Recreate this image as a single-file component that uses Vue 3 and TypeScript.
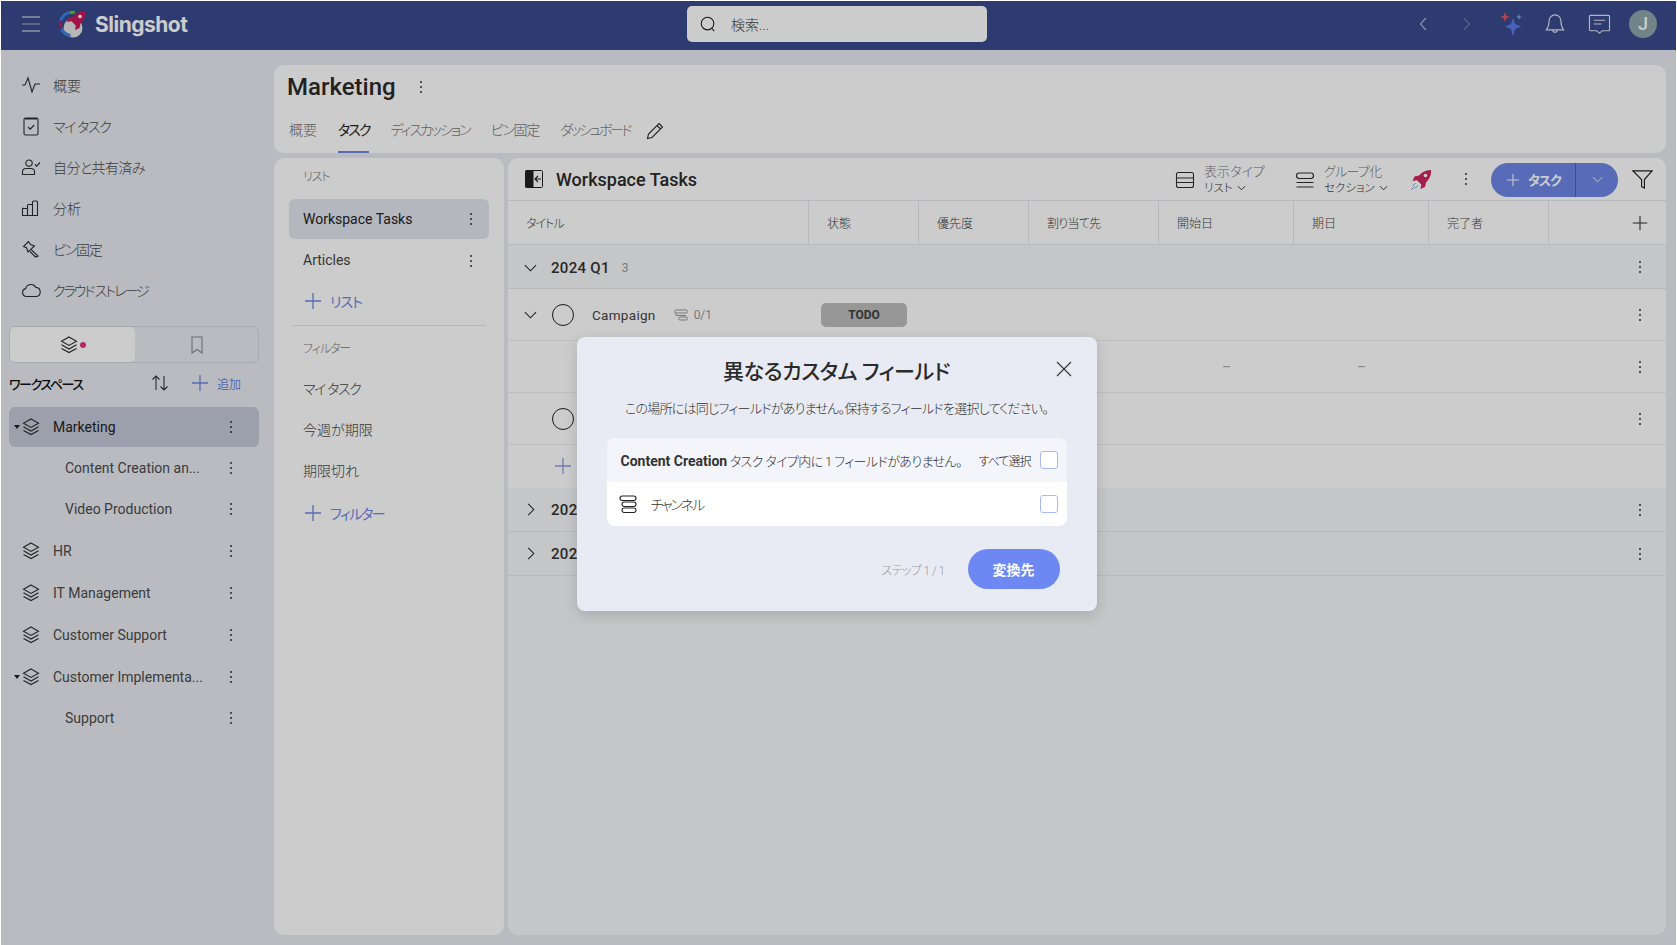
<script setup lang="ts">
const navItems = [
  { label: '概要', ls: '0', d: 'M1 10h3l3-7 4 14 3-8h5' },
  { label: 'マイ タスク', ls: '-1.4px', d: 'M3 3.5A1.5 1.5 0 0 1 4.5 2h11A1.5 1.5 0 0 1 17 3.5v14a1.5 1.5 0 0 1-1.5 1.5h-11A1.5 1.5 0 0 1 3 17.5zM4 3h12M7 11l2.2 2.2 4-4.2' },
  { label: '自分と共有済み', ls: '-.6px', d: 'M8 3a3.2 3.2 0 1 1 0 6.4A3.2 3.2 0 0 1 8 3zM1.5 17.5V15A3.5 3.5 0 0 1 5 11.5h5a3.5 3.5 0 0 1 3.5 3.5v2.5zM14 7.5l1.6 1.6 3.4-3.6' },
  { label: '分析', ls: '0', d: 'M2.5 10.5H6a.5.5 0 0 1 .5.5v6.5h-5V11a.5.5 0 0 1 1-.5zM6.5 7.5a1 1 0 0 1 1-1h3a1 1 0 0 1 1 1v10h-5zM11.5 4a1 1 0 0 1 1-1h3a1 1 0 0 1 1 1v13.5h-5z' },
  { label: 'ピン固定', ls: '-1.2px', d: 'M7.5 2.5L2.5 7.500l3 1.200 1.500 4.300 6.500-6-4-1.500zM10.500 11l6.500 6-2.500 1-5.500-5.500' },
  { label: 'クラウド ストレージ', ls: '-2px', d: 'M5.5 16.5a4 4 0 0 1-.8-7.9 5.5 5.5 0 0 1 10.2-1.2 4.6 4.6 0 0 1 .6 9.1z' },
]
const treeItems = [
  { label: 'Marketing', kind: 'project', caret: true, active: true },
  { label: 'Content Creation an...', kind: 'child' },
  { label: 'Video Production', kind: 'child' },
  { label: 'HR', kind: 'project' },
  { label: 'IT Management', kind: 'project' },
  { label: 'Customer Support', kind: 'project' },
  { label: 'Customer Implementa...', kind: 'project', caret: true },
  { label: 'Support', kind: 'child' },
]
const tabs = [
  { label: '概要', ls: '0' },
  { label: 'タスク', ls: '-2px' },
  { label: 'ディスカッション', ls: '-2px' },
  { label: 'ピン固定', ls: '-1.3px' },
  { label: 'ダッシュボード', ls: '-2.400px' },
]
const columns = ['状態', '優先度', '割り当て先', '開始日', '期日', '完了者']
const stack = 'M10 2l7.5 4.2L10 10.4 2.5 6.2zM2.5 9.8l7.5 4.2 7.5-4.2M2.5 13.4l7.5 4.2 7.5-4.2'
const rocket = 'M21 1c.5 5-1.500 9-5 12.500l-1 4.500-4.500 2 .8-4.500-4.300-4.300-4.500.8 2-4.500 4.500-1C12 3 16 .8 21 1z'
</script>

<template>
  <div class="app">
    <header class="topbar">
      <div class="brand">
        <svg class="burger" viewBox="0 0 18 16" width="18" height="16">
          <path d="M0 1h18M0 15h18" stroke="#f2f2f2" stroke-width="1" />
          <path d="M0 8h18" stroke="#aab" stroke-width="1.2" />
        </svg>
        <svg class="logo" viewBox="0 0 28 28" width="28" height="28">
          <circle cx="15" cy="18" r="9.500" fill="#e4e4e4" />
          <path d="M12 2.400A11.500 11.500 0 0 0 2.800 10.500" fill="none" stroke="#3b82e6" stroke-width="3" />
          <path d="M12 2.400l5-.2" fill="none" stroke="#5cc23a" stroke-width="3" />
          <path d="M2.600 12a12 12 0 0 0 .3 5" fill="none" stroke="#c9195a" stroke-width="3" />
          <path d="M3.500 19a12 12 0 0 0 9 6.500" fill="none" stroke="#3b82e6" stroke-width="3" />
          <path :d="rocket" fill="#c9195a" transform="translate(6.500 0)" />
          <circle cx="22" cy="6.500" r="1.800" fill="#fff" />
        </svg>
        <span class="brand-name">Slingshot</span>
      </div>
      <div class="search">
        <svg viewBox="0 0 20 20" width="18" height="18" fill="none" stroke="#222" stroke-width="1.200">
          <circle cx="9.500" cy="9.500" r="7" /><path d="M14.500 15l2.500 3" />
        </svg>
        <span class="jp">検索...</span>
      </div>
      <div class="top-actions">
        <button class="top-btn">
          <svg viewBox="0 0 12 20" width="10" height="18" fill="none" stroke="#c6cce6" stroke-width="1.300"><path d="M9.500 3L3 10l6.500 7" /></svg>
        </button>
        <button class="top-btn">
          <svg viewBox="0 0 12 20" width="10" height="18" fill="none" stroke="#7d86b5" stroke-width="1.300"><path d="M2.500 3L9 10l-6.500 7" /></svg>
        </button>
        <button class="top-btn">
          <svg viewBox="0 0 26 26" width="26" height="26">
            <path d="M15 7l2.200 6 5.800 2.500-5.800 2.500L15 25l-2.200-7L7 15.500l5.800-2.500z" fill="#5a7bea" />
            <path d="M7 1l1.300 3.700L12 6l-3.700 1.300L7 11 5.700 7.300 2 6l3.700-1.300z" fill="#e8505b" />
            <path d="M21 3l.8 2.200L24 6l-2.200.8L21 9l-.8-2.200L18 6l2.200-.8z" fill="#6db4ee" />
          </svg>
        </button>
        <button class="top-btn">
          <svg viewBox="0 0 22 24" width="20" height="22" fill="none" stroke="#e4e4ee" stroke-width="1.200">
            <path d="M11 2a6.500 6.500 0 0 1 6.500 6.500c0 5 1 7.500 3 10H1.500c2-2.500 3-5 3-10A6.500 6.500 0 0 1 11 2zM8.500 18.500a2.500 2.500 0 0 0 5 0" />
          </svg>
        </button>
        <button class="top-btn">
          <svg viewBox="0 0 24 22" width="23" height="21" fill="none" stroke="#e4e4ee" stroke-width="1.200">
            <path d="M2.500 1.500h19a1 1 0 0 1 1 1v14a1 1 0 0 1-1 1H15l-3 2.500-3-2.500H2.500a1 1 0 0 1-1-1v-14a1 1 0 0 1 1-1zM6 6.500h12M6 10.500h8" />
          </svg>
        </button>
        <button class="top-btn">
          <span class="avatar">J</span>
        </button>
      </div>
    </header>

    <div class="body">
      <aside class="sidebar">
        <nav class="nav">
          <div v-for="item in navItems" :key="item.label" class="nav-item">
            <svg class="icon20" viewBox="0 0 20 20"><path :d="item.d" /></svg>
            <span class="jp" :style="{ letterSpacing: item.ls }">{{ item.label }}</span>
          </div>
        </nav>
        <div class="switcher">
          <div class="switch-tab on">
            <svg class="icon20" viewBox="0 0 20 20"><path :d="stack" /></svg>
            <span class="dot-pink"></span>
          </div>
          <div class="switch-tab">
            <svg class="icon20 muted" viewBox="0 0 20 20"><path d="M5 2h10v16l-5-3.500L5 18z" /></svg>
          </div>
        </div>
        <div class="ws-head">
          <span class="ws-title jp">ワークスペース</span>
          <svg class="icon20 sort" viewBox="0 0 20 20"><path d="M6 17V3M2.500 6.500L6 3l3.500 3.500M14 3v14M10.500 13.500L14 17l3.500-3.500" /></svg>
          <svg class="icon20 plus" viewBox="0 0 20 20"><path d="M10 2v16M2 10h16" /></svg>
          <span class="ws-add">追加</span>
        </div>
        <div class="tree">
          <div
            v-for="row in treeItems"
            :key="row.label"
            class="tree-row"
            :class="[row.kind, { active: row.active }]"
          >
            <span v-if="row.caret" class="caret"></span>
            <svg v-if="row.kind === 'project'" class="icon20" viewBox="0 0 20 20"><path :d="stack" /></svg>
            <span class="tree-label">{{ row.label }}</span>
            <span class="kebab"><i></i><i></i><i></i></span>
          </div>
        </div>
      </aside>

      <main class="content">
        <section class="page-head">
          <div class="title-row">
            <h1>Marketing</h1>
            <span class="kebab dark"><i></i><i></i><i></i></span>
          </div>
          <div class="tabs">
            <span
              v-for="(t, i) in tabs"
              :key="t.label"
              class="tab jp"
              :class="{ on: i === 1 }"
              :style="{ letterSpacing: t.ls }"
            >{{ t.label }}</span>
            <svg class="icon20 pencil" viewBox="0 0 20 20"><path d="M14 2.500l3.500 3.500L7 16.500l-4.500 1 1-4.500zM12 4.500l3.500 3.500" /></svg>
          </div>
        </section>

        <div class="columns">
          <section class="lists">
            <div class="list-label jp">リスト</div>
            <div class="list-row on">
              <span>Workspace Tasks</span>
              <span class="kebab"><i></i><i></i><i></i></span>
            </div>
            <div class="list-row">
              <span>Articles</span>
              <span class="kebab"><i></i><i></i><i></i></span>
            </div>
            <div class="list-add first">
              <svg class="icon20 plus" viewBox="0 0 20 20"><path d="M10 2v16M2 10h16" /></svg>
              <span>リスト</span>
            </div>
            <div class="list-divider"></div>
            <div class="list-label filter jp">フィルター</div>
            <div class="list-row jp tight">マイ タスク</div>
            <div class="list-row jp">今週が期限</div>
            <div class="list-row jp">期限切れ</div>
            <div class="list-add">
              <svg class="icon20 plus" viewBox="0 0 20 20"><path d="M10 2v16M2 10h16" /></svg>
              <span>フィルター</span>
            </div>
          </section>

          <section class="board">
            <div class="toolbar">
              <svg class="collapse" viewBox="0 0 18 18" width="18" height="18">
                <rect x=".5" y=".5" width="17" height="17" rx="1" fill="#fff" stroke="#222" />
                <rect x=".5" y=".5" width="8" height="17" fill="#222" />
                <path d="M16 9h-5.500M13 6l-3 3 3 3" fill="none" stroke="#222" stroke-width="1.100" />
              </svg>
              <span class="board-title">Workspace Tasks</span>
              <div class="tool view">
                <svg class="icon20" viewBox="0 0 20 20"><rect x="1.500" y="2.500" width="17" height="15" rx="2" /><path d="M1.500 8h17M1.500 12.500h17" /></svg>
                <div class="tool-text jp">
                  <span class="tool-top">表示タイプ</span>
                  <span class="tool-sub">リスト
                    <svg viewBox="0 0 10 6" width="9" height="6"><path d="M1 1l4 4 4-4" fill="none" stroke="#222" /></svg>
                  </span>
                </div>
              </div>
              <div class="tool group">
                <svg class="icon20" viewBox="0 0 20 20"><rect x="1.500" y="3" width="17" height="5.500" rx="2.700" /><path d="M1.500 12.500h17M1.500 17h17" /></svg>
                <div class="tool-text jp">
                  <span class="tool-top narrow">グループ化</span>
                  <span class="tool-sub">セクション
                    <svg viewBox="0 0 10 6" width="9" height="6"><path d="M1 1l4 4 4-4" fill="none" stroke="#222" /></svg>
                  </span>
                </div>
              </div>
              <svg class="rocket" viewBox="0 0 22 22" width="22" height="22">
                <path :d="rocket" fill="#d0245f" />
                <circle cx="15.500" cy="6.500" r="1.800" fill="#fff" />
                <path d="M5.500 14l-3 3M8 16.500l-3 3M4.500 17.500L1 21" stroke="#6aa5e8" stroke-width="1" fill="none" />
              </svg>
              <span class="kebab dark tool-kebab"><i></i><i></i><i></i></span>
              <div class="split">
                <div class="split-main">
                  <svg viewBox="0 0 16 16" width="14" height="14"><path d="M8 1v14M1 8h14" stroke="#fff" stroke-width="1.200" /></svg>
                  <span>タスク</span>
                </div>
                <div class="split-caret">
                  <svg viewBox="0 0 12 7" width="11" height="7"><path d="M1 1l5 5 5-5" fill="none" stroke="#fff" /></svg>
                </div>
              </div>
              <svg class="funnel" viewBox="0 0 22 22" width="21" height="21">
                <path d="M1 2h20l-8 9v9l-3-1.500V11z" fill="none" stroke="#222" stroke-width="1.200" />
              </svg>
            </div>

            <div class="grid head">
              <div class="cell first jp">タイトル</div>
              <div v-for="c in columns" :key="c" class="cell line jp" :class="{ narrow: c === '割り当て先' }">{{ c }}</div>
              <div class="cell line end">
                <svg class="icon20 big-plus" viewBox="0 0 20 20"><path d="M10 2v16M2 10h16" /></svg>
              </div>
            </div>

            <div class="group-row open">
              <svg class="chev" viewBox="0 0 14 8" width="13" height="8"><path d="M1 1l6 6 6-6" fill="none" stroke="#222" stroke-width="1.100" /></svg>
              <span class="group-name">2024 Q1</span>
              <span class="group-count">3</span>
              <span class="kebab dark row-end"><i></i><i></i><i></i></span>
            </div>

            <div class="task-row">
              <div class="task-main">
                <svg class="chev" viewBox="0 0 14 8" width="13" height="8"><path d="M1 1l6 6 6-6" fill="none" stroke="#222" stroke-width="1.100" /></svg>
                <span class="circle"></span>
                <span class="task-name">Campaign</span>
                <svg class="sub-icon" viewBox="0 0 14 12" width="14" height="12" fill="none" stroke="#999"><path d="M2 1h10a1 1 0 0 1 0 3H2a1 1 0 0 1 0-3zM6 8h6a1 1 0 0 1 0 3H6a1 1 0 0 1 0-3zM2 4v2.500h10" /></svg>
                <span class="sub-count">0/1</span>
              </div>
              <div class="todo-wrap"><span class="todo">TODO</span></div>
              <span class="kebab dark row-end"><i></i><i></i><i></i></span>
            </div>

            <div class="task-row">
              <div class="task-main"></div>
              <span class="dash start">–</span>
              <span class="dash due">–</span>
              <span class="kebab dark row-end"><i></i><i></i><i></i></span>
            </div>

            <div class="task-row">
              <div class="task-main">
                <span class="chev-space"></span>
                <span class="circle"></span>
              </div>
              <span class="kebab dark row-end"><i></i><i></i><i></i></span>
            </div>

            <div class="add-row">
              <svg class="icon20 plus add-plus" viewBox="0 0 20 20"><path d="M10 2v16M2 10h16" /></svg>
            </div>

            <div class="group-row">
              <svg class="chev side" viewBox="0 0 8 14" width="8" height="13"><path d="M1 1l6 6-6 6" fill="none" stroke="#222" stroke-width="1.100" /></svg>
              <span class="group-name">2024 Q2</span>
              <span class="kebab dark row-end"><i></i><i></i><i></i></span>
            </div>
            <div class="group-row">
              <svg class="chev side" viewBox="0 0 8 14" width="8" height="13"><path d="M1 1l6 6-6 6" fill="none" stroke="#222" stroke-width="1.100" /></svg>
              <span class="group-name">2024 Q3</span>
              <span class="kebab dark row-end"><i></i><i></i><i></i></span>
            </div>
          </section>
        </div>
      </main>
    </div>

    <div class="overlay">
      <div class="modal">
        <h2 class="modal-title jp-m">異なるカスタム フィールド</h2>
        <svg class="modal-close" viewBox="0 0 16 16" width="16" height="16"><path d="M1 1l14 14M15 1L1 15" stroke="#333" stroke-width="1.100" /></svg>
        <p class="modal-desc jp">この場所には同じフィールドがありません。保持するフィールドを選択してください。</p>
        <div class="field-table">
          <div class="field-head">
            <span class="field-note jp"><b>Content Creation</b> タスク タイプ内に 1 フィールドがありません。</span>
            <span class="select-all jp">すべて選択</span>
            <span class="check"></span>
          </div>
          <div class="field-row">
            <svg class="channel" viewBox="0 0 18 18" width="18" height="18" fill="none" stroke="#222" stroke-width="1.100">
              <rect x="1" y="1" width="16" height="4.500" rx="2.200" />
              <rect x="3" y="7" width="14" height="4.500" rx="2.200" />
              <rect x="3" y="13" width="14" height="4.500" rx="2.200" />
            </svg>
            <span class="field-name jp">チャンネル</span>
            <span class="check"></span>
          </div>
        </div>
        <div class="modal-actions">
          <span class="step jp">ステップ 1 / 1</span>
          <button class="convert jp-m">変換先</button>
        </div>
      </div>
    </div>
  </div>
</template>

<style>
html, body { margin: 0; padding: 0; background: #fff; }
</style>

<style scoped>
.app {
  position: relative;
  height: 945px;
  width: 1677px;
  box-sizing: border-box;
  border: 1px solid #fff;
  border-bottom: 0;
  background: #e8eaf1;
  display: flex;
  flex-direction: column;
  overflow: hidden;
  font-family: Roboto, "Noto Sans CJK JP", sans-serif;
  font-size: 14px;
  color: #3f3f3f;
  font-feature-settings: "palt";
}
.jp { font-weight: 300; }
.jp-m { font-weight: 500; }
svg { display: block; flex: none; }
.icon20 { width: 20px; height: 20px; fill: none; stroke: #2e2e2e; stroke-width: 1.100; }
.icon20.muted { stroke: #888; }
.icon20.plus { stroke: #6f86e0; stroke-width: 1.300; }

/* top bar */
.topbar { height: 49px; background: #3a4a8c; display: flex; align-items: center; flex: none; padding-bottom: 3px; box-sizing: border-box; }
.brand { width: 686px; display: flex; align-items: center; padding-left: 21px; box-sizing: border-box; }
.logo { margin-left: 18px; }
.brand-name { margin-left: 9px; font-family: Inter, sans-serif; font-size: 21px; font-weight: 700; color: #fff; letter-spacing: -.5px; }
.search { width: 300px; height: 36px; background: #fff; border-radius: 5px; display: flex; align-items: center; padding-left: 12px; gap: 14px; box-sizing: border-box; font-size: 14px; color: #444; }
.top-actions { margin-left: auto; padding-right: 11px; display: flex; }
.top-btn { width: 44px; height: 40px; background: none; border: 0; padding: 0; display: flex; align-items: center; justify-content: center; }
.avatar { width: 28px; height: 28px; border-radius: 50%; background: #8ea5ab; color: #fff; font: 500 18px/28px Roboto, sans-serif; text-align: center; }

.body { flex: 1; display: flex; min-height: 0; }

/* sidebar */
.sidebar { width: 273px; flex: none; box-sizing: border-box; padding-top: 14px; }
.nav-item { height: 41px; display: flex; align-items: center; padding-left: 20px; gap: 12px; color: #4a4a4a; }
.switcher { margin: 16px 0 0 8px; width: 250px; height: 37px; box-sizing: border-box; border: 1px solid #d3d5dc; border-radius: 6px; display: flex; }
.switch-tab { flex: 1; display: flex; align-items: center; justify-content: center; position: relative; }
.switch-tab.on { background: #fff; border-radius: 5px; flex: 0 0 125px; gap: 1px; }
.dot-pink { width: 6px; height: 6px; border-radius: 50%; background: #e0357f; }
.ws-head { height: 44px; display: flex; align-items: center; padding: 0 0 4px 8px; box-sizing: border-box; }
.ws-title { width: 141px; font-size: 13px; font-weight: 500; color: #111; letter-spacing: -1.400px; }
.sort { stroke: #333; }
.ws-head .plus { margin-left: 20px; }
.ws-add { margin-left: 7px; font-size: 12px; color: #6f86e0; }
.tree-row { position: relative; height: 42px; display: flex; align-items: center; padding-left: 20px; color: #4a4a4a; }
.tree-row.child { height: 41px; padding-left: 64px; }
.project + .child { margin-top: -1px; }
.child + .project { margin-top: 1px; }
.tree-row.active { height: 40px; margin: 0 15px 1px 8px; padding-left: 12px; background: #c4c8d8; border-radius: 6px; color: #222; }
.tree-label { margin-left: 12px; }
.child .tree-label { margin-left: 0; }
.caret { position: absolute; left: 13px; top: 50%; margin-top: -2px; border: 3.500px solid transparent; border-top: 4.500px solid #222; border-bottom: 0; }
.active .caret { left: 5px; }
.kebab { position: absolute; right: 42px; top: 50%; transform: translateY(-50%); display: flex; flex-direction: column; gap: 3px; }
.kebab i { width: 2px; height: 2px; background: #333; border-radius: 50%; display: block; }
.active .kebab { right: 27px; }

/* content */
.content { flex: 1; min-width: 0; padding: 15px 10px 10px 0; display: flex; flex-direction: column; gap: 5px; }
.page-head { height: 88px; flex: none; background: #fff; border-radius: 10px; box-sizing: border-box; }
.title-row { height: 43px; display: flex; align-items: center; padding-left: 13px; }
h1 { margin: 0; font-size: 24px; font-weight: 500; color: #2b2b2b; line-height: 1; }
.title-row .kebab { position: static; transform: none; margin-left: 24px; gap: 3px; }
.tabs { height: 45px; display: flex; padding-left: 15px; gap: 21px; }
.tab { height: 45px; line-height: 45px; box-sizing: border-box; color: #777; }
.tab.on { color: #222; border-bottom: 2px solid #6f86e0; font-weight: 400; }
.pencil { margin-top: 13px; margin-left: -6px; }
.columns { flex: 1; min-height: 0; display: flex; gap: 4px; }
.lists { width: 230px; flex: none; background: #fff; border-radius: 10px; box-sizing: border-box; padding: 0 15px; }
.list-label { height: 41px; line-height: 38px; padding-left: 14px; font-size: 12px; color: #777; letter-spacing: -1.200px; }
.list-label.filter { height: 43px; line-height: 47px; padding-left: 14px; letter-spacing: -1.100px; }
.list-row { position: relative; height: 41px; line-height: 41px; padding-left: 14px; border-radius: 6px; color: #444; }
.list-row.tight { letter-spacing: -1.400px; }
.list-row.on { height: 40px; line-height: 40px; margin-bottom: 1px; background: #e3e5ee; color: #222; }
.list-row .kebab { right: 17px; }
.list-add { height: 41px; display: flex; align-items: center; padding-left: 14px; gap: 7px; color: #6f86e0; letter-spacing: -1.400px; }
.list-add.first { height: 39px; letter-spacing: -1px; }
.list-divider { height: 1px; margin: 5px 3px 0; background: #e4e5ea; }

.board { flex: 1; min-width: 0; background: #f7f8fa; border-radius: 10px; overflow: hidden; }
.toolbar { height: 43px; background: #fff; display: flex; align-items: center; padding-left: 17px; border-bottom: 1px solid #e6e8ec; box-sizing: border-box; }
.board-title { margin-left: 13px; font-size: 18px; font-weight: 500; color: #2b2b2b; width: 619px; }
.tool { display: flex; align-items: center; gap: 9px; padding-top: 2px; }
.tool.view { width: 120px; }
.tool.group { width: 115px; }
.tool-text { display: flex; flex-direction: column; line-height: 16px; }
.tool-top { font-size: 13px; color: #777; }
.tool-top.narrow { letter-spacing: -.7px; }
.tool-sub { font-size: 11.500px; color: #333; display: flex; align-items: center; gap: 4px; }
.rocket { margin-top: 2px; }
.tool-kebab { position: static; transform: none; margin-left: 33px; }
.split { margin: 1px 0 0 24px; width: 127px; height: 34px; background: #6f86e6; border-radius: 17px; display: flex; color: #fff; overflow: hidden; }
.split-main { width: 85px; display: flex; align-items: center; gap: 8px; padding-left: 15px; box-sizing: border-box; font-weight: 700; font-size: 13px; letter-spacing: -1px; border-right: 1px solid #4c62bd; }
.split-caret { flex: 1; display: flex; align-items: center; justify-content: center; }
.funnel { margin-left: 14px; }

.grid { display: grid; grid-template-columns: 300px 110px 110px 130px 135px 135px 120px 117px; }
.head { height: 44px; background: #fff; border-bottom: 1px solid #e6e8ec; box-sizing: border-box; }
.cell { display: flex; align-items: center; font-size: 12px; color: #444; padding-left: 18px; }
.cell.first { padding-left: 18px; letter-spacing: -1px; }
.cell.narrow { letter-spacing: -.7px; }
.cell.line { border-left: 1px solid #e6e8ec; }
.cell.end { justify-content: flex-end; padding-right: 16px; }
.big-plus { width: 18px; height: 18px; stroke-width: 1.200; stroke: #333; }

.group-row { position: relative; height: 44px; display: flex; align-items: center; padding-left: 16px; background: #f7f8fa; border-bottom: 1px solid #e6e8ec; box-sizing: border-box; }
.group-row.open { padding-top: 2px; }
.group-name { margin-left: 14px; font-size: 15px; font-weight: 500; color: #333; letter-spacing: .3px; }
.group-count { margin-left: 12px; font-size: 12px; color: #999; }
.chev.side { margin-left: 3px; margin-right: 2px; }
.row-end { right: 25px; }
.task-row { position: relative; height: 52px; display: flex; align-items: center; background: #fff; border-bottom: 1px solid #eceef1; box-sizing: border-box; }
.task-main { width: 300px; flex: none; display: flex; align-items: center; padding-left: 16px; box-sizing: border-box; }
.chev-space { width: 13px; }
.circle { width: 22px; height: 22px; border: 1.200px solid #222; border-radius: 50%; box-sizing: border-box; margin-left: 15px; flex: none; }
.task-name { margin-left: 18px; font-size: 13.500px; letter-spacing: .3px; color: #444; }
.sub-icon { margin-left: 18px; }
.sub-count { margin-left: 6px; font-size: 12px; color: #999; }
.todo-wrap { padding-left: 13px; }
.todo { display: block; width: 86px; height: 24px; line-height: 24px; text-align: center; border-radius: 5px; background: #bdbdbd; font-size: 12px; font-weight: 700; color: #3f3f3f; }
.dash { position: absolute; color: #aaa; font-size: 14px; }
.dash.start { left: 714px; }
.dash.due { left: 849px; }
.add-row { height: 43px; background: #fff; display: flex; align-items: center; padding: 0 0 2px 45px; box-sizing: border-box; }
.add-plus { opacity: .8; }

/* overlay and modal */
.overlay { position: absolute; inset: -1px -1px 0 -1px; background: rgba(0, 0, 0, .2); display: flex; align-items: center; justify-content: center; padding: 3px 4px 0 0; box-sizing: border-box; }
.modal { position: relative; width: 520px; height: 274px; box-sizing: border-box; background: #e8ebf3; border-radius: 8px; padding: 22px 30px 20px; box-shadow: 0 4px 14px rgba(0, 0, 0, .14); color: #333; }
.modal-title { margin: 0; text-align: center; font-size: 21px; line-height: 26px; color: #2b2b2b; letter-spacing: -.4px; }
.modal-close { position: absolute; right: 25px; top: 24px; }
.modal-desc { margin: 14px 0 0; text-align: center; font-size: 13px; line-height: 20px; color: #333; letter-spacing: -.75px; }
.field-table { margin-top: 19px; border-radius: 8px; overflow: hidden; }
.field-head { height: 44px; background: #f4f5fa; display: flex; align-items: center; padding: 0 9px 0 14px; font-size: 13px; }
.field-note { flex: 1; color: #333; letter-spacing: -.6px; }
.field-note b { font-weight: 700; font-size: 14px; letter-spacing: 0; }
.select-all { font-size: 12px; margin-right: 9px; color: #222; letter-spacing: -1px; }
.check { width: 18px; height: 18px; box-sizing: border-box; border: 1.500px solid #a9b9f5; border-radius: 3px; background: #fff; flex: none; }
.field-row { height: 44px; background: #fff; display: flex; align-items: center; padding: 0 9px 0 12px; }
.field-name { flex: 1; margin-left: 14px; font-size: 14px; color: #333; letter-spacing: -2px; }
.modal-actions { margin: 23px 7px 0 0; height: 40px; display: flex; align-items: center; justify-content: flex-end; gap: 23px; }
.step { font-size: 12px; color: #9a9a9a; letter-spacing: -.6px; }
.convert { width: 92px; height: 40px; border: 0; border-radius: 20px; background: #6d88f3; color: #fff; font-family: inherit; font-size: 14px; font-weight: 700; }
</style>
